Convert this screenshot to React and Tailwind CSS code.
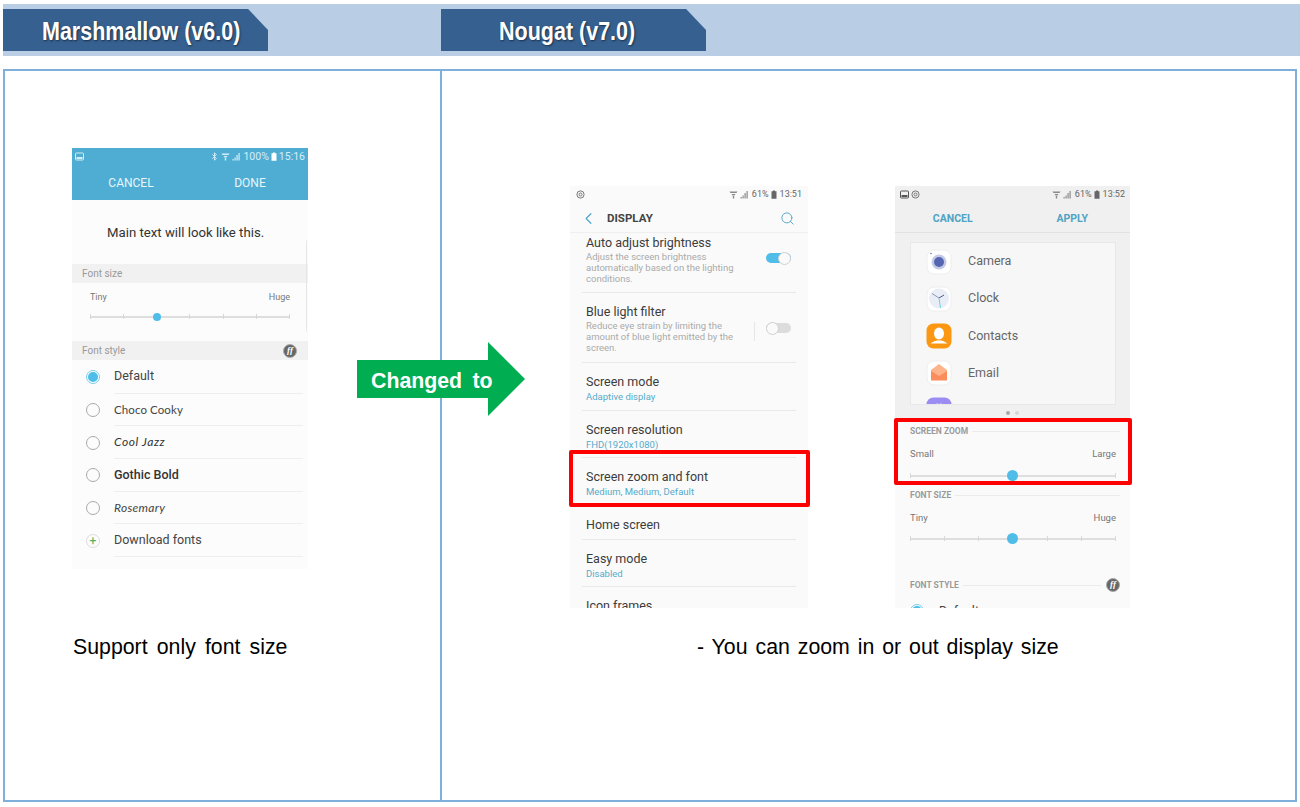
import React from 'react'
import { ChevronLeft, Search, Bluetooth } from 'lucide-react'

const WifiIcon = ({ color = '#8a8a8a' }) => (
  <svg width="9" height="9" viewBox="0 0 9 9">
    <path d="M0.5 1.5 H8.5 L7.5 3 H1.5 Z M2.5 4 H6.5 L5.5 5.5 H3.5 Z" fill={color} />
    <rect x="3.8" y="6" width="1.4" height="2.5" fill={color} />
  </svg>
)

const SignalIcon = ({ color = '#8a8a8a' }) => (
  <svg width="9" height="9" viewBox="0 0 9 9">
    <rect x="0.5" y="7" width="1.2" height="1.5" fill={color} />
    <rect x="2.5" y="5.5" width="1.2" height="3" fill={color} />
    <rect x="4.5" y="3" width="1.2" height="5.5" fill={color} />
    <rect x="6.5" y="1" width="1.2" height="7.5" fill={color} />
  </svg>
)

const BatteryIcon = ({ color = '#8a8a8a' }) => (
  <svg width="6" height="9" viewBox="0 0 6 9">
    <path d="M2 0.5 H4 V1.3 H5.5 V8.7 H0.5 V1.3 H2 Z" fill={color} />
  </svg>
)

const SyncIcon = () => (
  <svg width="9" height="9" viewBox="0 0 9 9">
    <circle cx="4.5" cy="4.5" r="3.6" fill="none" stroke="#777" strokeWidth="1" />
    <circle cx="4.5" cy="4.5" r="1.5" fill="none" stroke="#777" strokeWidth="1" />
  </svg>
)

const PictureIcon = ({ color = '#555' }) => (
  <svg width="9" height="9" viewBox="0 0 9 9">
    <rect x="0.5" y="1" width="8" height="7" rx="0.8" fill="none" stroke={color} strokeWidth="1" />
    <rect x="1.5" y="5" width="6" height="2" fill={color} />
  </svg>
)

const FontBadge = () => (
  <div className="flex h-[14px] w-[14px] shrink-0 items-center justify-center rounded-full border border-[#aaa] bg-[#666] font-['Liberation_Serif',serif] text-[9px] font-bold italic text-white">
    ff
  </div>
)

const Radio = ({ on }) => (
  <div
    className={
      on
        ? 'flex h-[14px] w-[14px] shrink-0 items-center justify-center rounded-full border border-[#7ccdee]'
        : 'h-[14px] w-[14px] shrink-0 rounded-full border border-[#aaa]'
    }
  >
    {on && <div className="h-[10px] w-[10px] rounded-full bg-[#4dbde9]" />}
  </div>
)

const Slider = ({ ticks, thumb, thumbSize }) => (
  <div className="relative h-[11px] w-full">
    <div className="absolute left-0 right-0 top-[4.5px] h-[2px] bg-[#dedede]" />
    <div className="absolute inset-0 flex justify-between">
      {Array.from({ length: ticks }).map((_, i) => (
        <div key={i} className="mt-[3px] h-[5px] w-[1px] bg-[#d8d8d8]" />
      ))}
    </div>
    <div
      className="absolute rounded-full bg-[#4fbde8]"
      style={{ left: thumb, width: thumbSize, height: thumbSize, top: (11 - thumbSize) / 2 }}
    />
  </div>
)

const Toggle = ({ on }) => (
  <div
    className={
      on
        ? 'flex h-[10px] w-[25px] items-center justify-end rounded-full bg-[#4fbde8]'
        : 'flex h-[10px] w-[25px] items-center rounded-full bg-[#dcdcdc]'
    }
  >
    <div className="h-[13px] w-[13px] rounded-full border border-[#d0d0d0] bg-[#fafafa]" />
  </div>
)

const FontRow = ({ on, plus, className, children }) => (
  <div className="flex h-[32.7px] items-center">
    <div className="flex w-[42px] justify-center">
      {plus ? (
        <div className="flex h-[14px] w-[14px] items-center justify-center rounded-full border border-[#ddd] text-[12px] leading-none text-[#55b05a]">
          +
        </div>
      ) : (
        <Radio on={on} />
      )}
    </div>
    <div className={'flex h-full flex-1 items-center border-b border-[#eee] ' + (className || 'text-[12.5px] text-[#444]')}>
      {children}
    </div>
  </div>
)

const MarshmallowPhone = () => (
  <div className="relative flex h-[421px] w-[236px] flex-col overflow-hidden bg-[#fcfcfc] font-['Roboto',sans-serif]">
    <div className="h-[52px] shrink-0 bg-[#4fadd3] text-white">
      <div className="flex h-[17px] items-center justify-between px-[3px] text-[10.5px] text-[#d5edf7]">
        <PictureIcon color="#d5edf7" />
        <div className="flex items-center gap-[2px]">
          <Bluetooth size={9} strokeWidth={2.5} />
          <WifiIcon color="#d5edf7" />
          <SignalIcon color="#d5edf7" />
          <span>100%</span>
          <BatteryIcon color="#ffffff" />
          <span>15:16</span>
        </div>
      </div>
      <div className="flex pt-[2px] text-[12px] leading-[32px] text-[#e8f5fa]">
        <div className="w-[118px] text-center">CANCEL</div>
        <div className="w-[118px] pl-[2px] text-center">DONE</div>
      </div>
    </div>
    <div className="flex h-[64px] shrink-0 items-center pl-[35px] pt-[2px] text-[13.2px] text-[#333]">Main text will look like this.</div>
    <div className="flex h-[19px] shrink-0 items-center bg-[#f1f1f1] pl-[10px] text-[10px] text-[#999]">Font size</div>
    <div className="h-[58px] shrink-0 px-[18px] pt-[7px]">
      <div className="flex justify-between text-[9px] leading-[14px] text-[#777]">
        <span>Tiny</span>
        <span>Huge</span>
      </div>
      <div className="mt-[7px]">
        <Slider ticks={7} thumb={63} thumbSize={8} />
      </div>
    </div>
    <div className="flex h-[19px] shrink-0 items-center justify-between bg-[#f1f1f1] pl-[10px] pr-[11px] text-[10px] text-[#999]">
      <span>Font style</span>
      <FontBadge />
    </div>
    <div className="pr-[5px] pt-[1px]">
      <FontRow on>Default</FontRow>
      <FontRow className="font-['Lato',sans-serif] text-[11.5px] tracking-[0.1px] text-[#444]">Choco Cooky</FontRow>
      <FontRow className="font-['Lato',sans-serif] text-[12px] italic tracking-[0.6px] text-[#333]">Cool Jazz</FontRow>
      <FontRow className="text-[12.5px] font-medium text-[#333]">Gothic Bold</FontRow>
      <FontRow className="font-['Lato',sans-serif] text-[12px] italic tracking-[0.3px] text-[#444]">Rosemary</FontRow>
      <FontRow plus>Download fonts</FontRow>
    </div>
    <div className="absolute right-[0px] top-[92px] h-[92px] w-[2px] rounded-l-full border-l border-[#e6e6e6]" />
  </div>
)

const DisplayRow = ({ title, sub, desc, height, top, toggle, sep }) => (
  <div className="mx-[12px] shrink-0 border-b border-[#e9e9e9] px-[4px]" style={{ height, paddingTop: top }}>
    <div className="relative">
      <div className="text-[12.5px] leading-[15px] text-[#3c3c3c]">{title}</div>
      {sub && <div className="text-[9.5px] leading-[15px] text-[#56aacb]">{sub}</div>}
      {desc && <div className="w-[155px] pt-[1px] text-[9.5px] leading-[11px] text-[#aaa]">{desc}</div>}
      {toggle !== undefined && (
        <div className={toggle ? 'absolute right-[1px] top-[18px]' : 'absolute right-[1px] top-[19px]'}>
          <Toggle on={toggle} />
        </div>
      )}
      {sep && <div className="absolute right-[37px] top-[18px] h-[19px] w-[1px] bg-[#e6e6e6]" />}
    </div>
  </div>
)

const DisplayPhone = () => (
  <div className="flex h-[422px] w-[238px] flex-col overflow-hidden bg-[#fafafa] font-['Roboto',sans-serif]">
    <div className="flex h-[17px] shrink-0 items-center justify-between px-[6px] text-[9px] text-[#666]">
      <SyncIcon />
      <div className="flex items-center gap-[2.5px]">
        <WifiIcon />
        <SignalIcon />
        <span>61%</span>
        <BatteryIcon color="#666" />
        <span>13:51</span>
      </div>
    </div>
    <div className="flex h-[30px] shrink-0 items-center border-b border-[#efefef] pt-[2px]">
      <ChevronLeft size={19} strokeWidth={1.5} className="ml-[9px] text-[#4fa5c8]" />
      <span className="ml-[9px] text-[11.5px] font-bold text-[#444]">DISPLAY</span>
      <Search size={15} strokeWidth={1.5} className="ml-auto mr-[13px] text-[#4fa5c8]" />
    </div>
    <DisplayRow
      title="Auto adjust brightness"
      desc="Adjust the screen brightness automatically based on the lighting conditions."
      height={60}
      top={2}
      toggle={true}
    />
    <DisplayRow
      title="Blue light filter"
      desc="Reduce eye strain by limiting the amount of blue light emitted by the screen."
      height={70}
      top={11}
      toggle={false}
      sep
    />
    <DisplayRow title="Screen mode" sub="Adaptive display" height={48} top={11} />
    <DisplayRow title="Screen resolution" sub="FHD(1920x1080)" height={47} top={11} />
    <DisplayRow title="Screen zoom and font" sub="Medium, Medium, Default" height={49} top={11} />
    <DisplayRow title="Home screen" height={33} top={10} />
    <DisplayRow title="Easy mode" sub="Disabled" height={47} top={11} />
    <DisplayRow title="Icon frames" height={30} top={11} />
  </div>
)

const CameraIcon = () => (
  <svg width="26" height="26" viewBox="0 0 26 26">
    <rect x="1" y="1" width="24" height="24" rx="7" fill="#fff" stroke="#eee" />
    <circle cx="13" cy="13" r="7.5" fill="#c3c9e6" />
    <circle cx="13" cy="13" r="5" fill="#5466b2" />
    <circle cx="5" cy="4.5" r="0.7" fill="#4a5a9a" />
  </svg>
)

const ClockIcon = () => (
  <svg width="26" height="26" viewBox="0 0 26 26">
    <rect x="1" y="1" width="24" height="24" rx="7" fill="#fff" stroke="#eee" />
    <circle cx="13" cy="12.5" r="10" fill="#e9edf5" />
    <path d="M13 12 L6 7.5" stroke="#8f99b5" strokeWidth="1" />
    <path d="M13 12 L18 9" stroke="#4a5a8a" strokeWidth="1" />
    <path d="M13 12 L14.5 22" stroke="#6fd0e6" strokeWidth="1" />
  </svg>
)

const ContactsIcon = () => (
  <svg width="26" height="26" viewBox="0 0 26 26">
    <rect x="0.5" y="0.5" width="25" height="25" rx="7" fill="#fb9712" />
    <ellipse cx="13" cy="10.5" rx="5" ry="6" fill="#fff" />
    <path d="M4.5 20.5 C8 18 10 17.5 13 17.5 C16 17.5 18 18 21.5 20.5 Z" fill="#fff" />
  </svg>
)

const EmailIcon = () => (
  <svg width="26" height="26" viewBox="0 0 26 26">
    <rect x="1" y="1" width="24" height="24" rx="7" fill="#fff" stroke="#eee" />
    <path d="M5 10 L13 4 L21 10 V20 H5 Z" fill="#fdb48a" />
    <path d="M5 11 L13 16 L21 11 V20.5 H5 Z" fill="#fb8c5c" />
  </svg>
)

const InternetIcon = () => (
  <svg width="26" height="26" viewBox="0 0 26 26">
    <rect x="0.5" y="0.5" width="25" height="25" rx="7" fill="#9a8cf2" />
    <circle cx="13" cy="13" r="7" fill="#c9c3f7" />
    <path d="M13 6 L13 13 L19 16" stroke="#9a8cf2" strokeWidth="1.5" fill="none" />
  </svg>
)

const AppRow = ({ icon, name }) => (
  <div className="flex h-[37.2px] shrink-0 items-center">
    <div className="ml-[15px] h-[26px] w-[26px]">{icon}</div>
    <span className="ml-[16px] text-[12.5px] text-[#666]">{name}</span>
  </div>
)

const SectionLabel = ({ children, right }) => (
  <div className="flex items-center gap-[4px] pl-[15px] pr-[10px]">
    <span className="text-[8.5px] font-bold leading-[12px] text-[#9a9a9a]">{children}</span>
    <div className="h-[1px] flex-1 bg-[#ececec]" />
    {right}
  </div>
)

const ZoomPhone = () => (
  <div className="flex h-[422px] w-[235px] flex-col overflow-hidden bg-[#f0f0f0] font-['Roboto',sans-serif]">
    <div className="flex h-[17px] shrink-0 items-center justify-between px-[5px] text-[9px] text-[#666]">
      <div className="flex items-center gap-[2px]">
        <PictureIcon />
        <SyncIcon />
      </div>
      <div className="flex items-center gap-[2.5px]">
        <WifiIcon />
        <SignalIcon />
        <span>61%</span>
        <BatteryIcon color="#666" />
        <span>13:52</span>
      </div>
    </div>
    <div className="flex h-[30px] shrink-0 border-b border-[#e2e2e2] pt-[1px] text-[10.5px] font-bold leading-[29px] text-[#4fa3c4]">
      <div className="w-[116px] text-center">CANCEL</div>
      <div className="w-[120px] pl-[4px] text-center">APPLY</div>
    </div>
    <div className="ml-[15px] mr-[14px] mt-[9px] flex h-[163px] shrink-0 flex-col overflow-hidden border border-[#e8e8e8] bg-[#f7f7f7]">
      <AppRow icon={<CameraIcon />} name="Camera" />
      <AppRow icon={<ClockIcon />} name="Clock" />
      <AppRow icon={<ContactsIcon />} name="Contacts" />
      <AppRow icon={<EmailIcon />} name="Email" />
      <AppRow icon={<InternetIcon />} name="Internet" />
    </div>
    <div className="flex h-[15px] shrink-0 items-center justify-center gap-[5px]">
      <div className="h-[4px] w-[4px] rounded-full bg-[#a8a8a8]" />
      <div className="h-[4px] w-[4px] rounded-full bg-[#d6d6d6]" />
    </div>
    <div className="flex-1 bg-[#fafafa] pt-[5px]">
      <SectionLabel>SCREEN ZOOM</SectionLabel>
      <div className="mt-[10px] flex justify-between pl-[15px] pr-[14px] text-[9.5px] leading-[14px] text-[#777]">
        <span>Small</span>
        <span>Large</span>
      </div>
      <div className="mt-[9px] pl-[15px] pr-[14px]">
        <Slider ticks={2} thumb={97} thumbSize={11} />
      </div>
      <div className="mt-[8px]">
        <SectionLabel>FONT SIZE</SectionLabel>
      </div>
      <div className="mt-[10px] flex justify-between pl-[15px] pr-[14px] text-[9.5px] leading-[14px] text-[#777]">
        <span>Tiny</span>
        <span>Huge</span>
      </div>
      <div className="mt-[8px] pl-[15px] pr-[14px]">
        <Slider ticks={7} thumb={97} thumbSize={11} />
      </div>
      <div className="mt-[34px]">
        <SectionLabel right={<FontBadge />}>FONT STYLE</SectionLabel>
      </div>
      <div className="mt-[10px] flex items-center pl-[15px] text-[12.5px] text-[#444]">
        <Radio on />
        <span className="ml-[15px]">Default</span>
      </div>
    </div>
  </div>
)

const Tab = ({ shift, children }) => (
  <div className="flex h-[42px] w-[265px] items-center bg-[#36608f] pt-[4px] font-['Liberation_Sans',sans-serif] text-[25px] font-bold text-white [clip-path:polygon(0_0,92.5%_0,100%_50%,100%_100%,0_100%)] [text-shadow:1px_1px_2px_#1c2f47]">
    <span className="inline-block origin-left scale-x-[0.86] whitespace-nowrap" style={{ marginLeft: shift }}>
      {children}
    </span>
  </div>
)

const App = () => {
  return (
    <div className="relative h-[807px] w-[1300px] overflow-hidden bg-white font-['Liberation_Sans',sans-serif]">
      <div className="ml-[3px] mt-[4px] flex h-[52px] bg-[#b9cde5] pt-[5px]">
        <Tab shift={39}>Marshmallow (v6.0)</Tab>
        <div className="w-[173px]" />
        <Tab shift={58}>Nougat (v7.0)</Tab>
      </div>

      <div className="ml-[3px] mt-[13px] flex h-[733px] w-[1294px] border-2 border-[#7fb0dc]">
        <div className="flex w-[437px] shrink-0 flex-col border-r-2 border-[#7fb0dc] pl-[67px] pt-[77px]">
          <MarshmallowPhone />
          <p className="ml-[1px] mt-[65px] text-[21.3px] leading-[26px] text-black [word-spacing:3.2px]">Support only font size</p>
        </div>
        <div className="flex flex-1 flex-col">
          <div className="flex pl-[128px] pt-[115px]">
            <DisplayPhone />
            <div className="w-[87px]" />
            <ZoomPhone />
          </div>
          <p className="mt-[26px] pl-[255px] text-[21.3px] leading-[26px] text-black [word-spacing:2px]">- You can zoom in or out display size</p>
        </div>
      </div>

      {/* arrow sits over the column divider */}
      <div className="absolute left-[357px] top-[342px] h-[74px] w-[168px]">
        <svg width="168" height="74" viewBox="0 0 168 74" className="absolute inset-0">
          <path d="M0 18 H131 V0 L168 37 L131 74 V56 H0 Z" fill="#00ad50" />
        </svg>
        <div className="absolute left-[14px] top-[27px] text-[21.3px] font-bold leading-[24px] text-white [word-spacing:4.5px]">Changed to</div>
      </div>

      {/* red highlights over the phones */}
      <div className="absolute left-[569px] top-[450px] h-[57px] w-[241px] rounded-[2px] border-[4px] border-[#ff0000]" />
      <div className="absolute left-[894px] top-[418px] h-[67px] w-[238px] rounded-[2px] border-[4px] border-[#ff0000]" />
    </div>
  )
}

export default App
